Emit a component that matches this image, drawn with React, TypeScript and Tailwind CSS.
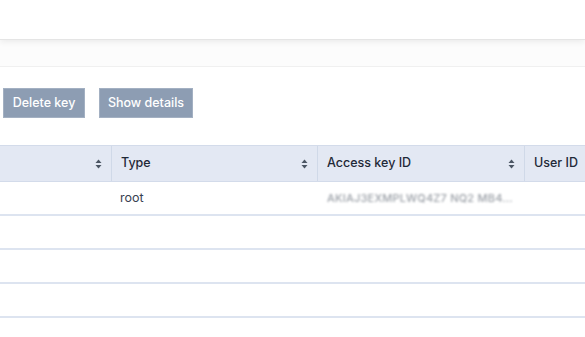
import React from "react";

function SortIcon() {
  return (
    <svg width="7" height="10" viewBox="0 0 7 10" className="shrink-0">
      <path d="M3.5 0.5 L6.5 4 H0.5 Z" fill="#4b5563" />
      <path d="M3.5 9.5 L6.5 6 H0.5 Z" fill="#4b5563" />
    </svg>
  );
}

const columns = [
  { label: "", width: "w-[112px] shrink-0" },
  { label: "Type", width: "w-[206px] shrink-0" },
  { label: "Access key ID", width: "w-[207px] shrink-0" },
  { label: "User ID", width: "w-[160px] shrink-0" },
];

export default function App() {
  return (
    <div className="w-[585px] h-[337px] overflow-hidden bg-white font-['Inter',sans-serif] text-[#1f2937]">
      <div className="h-10 bg-white relative z-10 shadow-[0_2px_6px_rgba(0,0,0,0.07)] border-b border-[#e5e5e5]" />
      <div className="h-[27px] bg-[#fcfcfc] border-b border-[#f0f0f0]" />

      <div className="flex gap-[14px] pl-[3px] pt-[21px]">
        <button className="h-[30px] w-[82px] bg-[#8d9db3] border border-[#a3b0c2] text-white text-[12.5px] font-medium">
          Delete key
        </button>
        <button className="h-[30px] w-[94px] bg-[#8d9db3] border border-[#a3b0c2] text-white text-[12.5px] font-medium">
          Show details
        </button>
      </div>

      <div className="mt-[27px] w-[700px]">
        <div className="flex h-[37px] bg-[#e3e8f3] border-t border-b border-[#d3dbea]">
          {columns.map((c, i) => (
            <div
              key={i}
              className={`${c.width} flex items-center justify-between px-[9px] whitespace-nowrap ${i < 3 ? "border-r border-[#d0d9e8]" : ""}`}
            >
              <span className="text-[12.5px] font-medium text-[#1f2937]">{c.label}</span>
              {i < 3 && <SortIcon />}
            </div>
          ))}
        </div>

        <div className="flex h-[34px] items-center border-b-2 border-[#dde4f0]">
          <div className="w-[112px] shrink-0" />
          <div className="w-[206px] shrink-0 px-[8px] text-[12.5px] text-[#374151]">root</div>
          <div className="w-[207px] shrink-0 px-[9px]">
            <span className="block whitespace-nowrap text-[11px] font-medium text-[#9ca1a8] blur-[1.3px] tracking-[0.2px]">
              AKIAJ3EXMPLWQ4Z7 NQ2 MB4...
            </span>
          </div>
        </div>
        <div className="h-[34px] border-b-2 border-[#dde4f0]" />
        <div className="h-[34px] border-b-2 border-[#dde4f0]" />
        <div className="h-[34px] border-b-2 border-[#dde4f0]" />
      </div>
    </div>
  );
}
